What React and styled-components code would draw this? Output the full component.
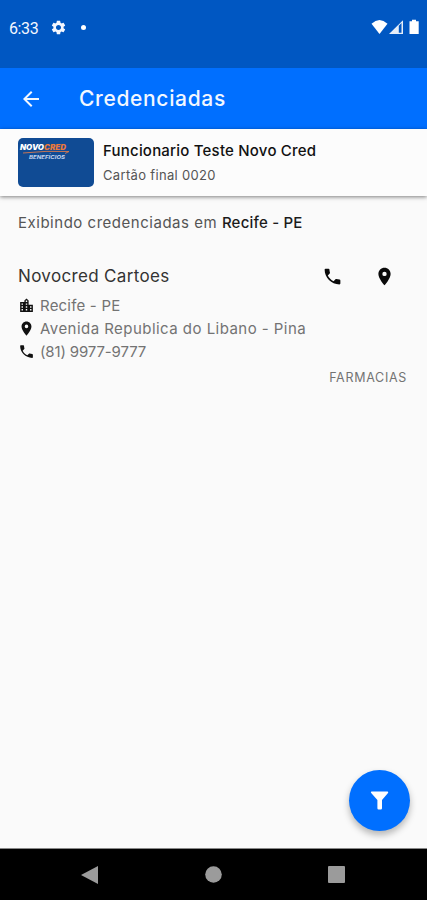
import styled, { createGlobalStyle } from "styled-components";
import {
  MdArrowBack,
  MdLocationCity,
  MdPhone,
  MdPlace,
  MdSettings,
} from "react-icons/md";

const GlobalStyle = createGlobalStyle`
  * {
    box-sizing: border-box;
  }
  body {
    margin: 0;
    background-color: #fafafa;
    font-family: Inter, "Open Sans", sans-serif;
  }
  svg {
    display: block;
    flex-shrink: 0;
  }
`;

const Screen = styled.div`
  position: relative;
  display: flex;
  flex-direction: column;
  width: 100%;
  height: 900px;
  overflow: hidden;
  background-color: #fafafa;
`;

const StatusBar = styled.div`
  display: flex;
  align-items: flex-start;
  justify-content: space-between;
  height: 68px;
  padding: 19px 7px 0 9px;
  background-color: #0057c2;
  color: #f4f7ff;
`;

const StatusGroup = styled.div`
  display: flex;
  align-items: center;
  height: 16px;
`;

const Clock = styled.span`
  width: 41px;
  padding-top: 3px;
  font-family: Roboto, sans-serif;
  font-size: 16px;
  line-height: 16px;
  letter-spacing: -0.4px;
`;

const Dot = styled.span`
  width: 5px;
  height: 5px;
  margin-left: 14px;
  border-radius: 50%;
  background-color: #fff;
`;

const AppBar = styled.header`
  display: flex;
  align-items: center;
  height: 61px;
  padding-left: 19px;
  background-color: #006fff;
  color: #f2f7ff;
`;

const Title = styled.h1`
  margin: 0 0 0 36px;
  font-size: 21px;
  font-weight: 500;
  line-height: 28px;
  letter-spacing: ${(props) => props.$spacing}px;
`;

const CardHolder = styled.section`
  position: relative;
  display: flex;
  height: 67px;
  padding: 9px 18px;
  background-color: #fcfcfc;
  box-shadow: 0 1px 4px rgba(0, 0, 0, 0.5);
`;

const BenefitCard = styled.div`
  width: 76px;
  height: 49px;
  border-radius: 5px;
  background-color: #104b94;
  color: #fff;
`;

const HolderInfo = styled.div`
  margin-left: 9px;
`;

const Text = styled.p`
  margin: 0;
  color: ${(props) => props.$color || "#737373"};
  font-size: ${(props) => props.$size}px;
  font-weight: ${(props) => props.$weight || 400};
  line-height: ${(props) => props.$line || 24}px;
  letter-spacing: ${(props) => props.$spacing || 0}px;
  white-space: nowrap;
`;

const Strong = styled.strong`
  color: #1c1c1c;
  font-weight: 500;
  letter-spacing: ${(props) => props.$spacing}px;
`;

const Content = styled.main`
  flex: 1;
  padding: 15px 18px 0;
`;

const Store = styled.article`
  margin-top: 28px;
`;

const StoreHeader = styled.div`
  display: flex;
  align-items: center;
  justify-content: space-between;
  height: 26px;
  margin-bottom: 5px;
`;

const Actions = styled.div`
  display: flex;
  gap: 31px;
  padding: 1px 14px 0 0;
`;

const IconButton = styled.button`
  padding: 0;
  border: none;
  background: none;
  color: #0a0a0a;
`;

const InfoRow = styled.div`
  display: flex;
  align-items: center;
  gap: 5px;
  height: 23px;
  color: #111;
`;

const Category = styled(Text)`
  margin-top: 3px;
  padding-right: 2px;
  text-align: right;
`;

const FilterButton = styled.button`
  position: absolute;
  right: 17px;
  bottom: 69px;
  display: flex;
  align-items: center;
  justify-content: center;
  width: 61px;
  height: 61px;
  padding: 0;
  border: none;
  border-radius: 50%;
  background-color: #006fff;
  box-shadow: 0 4px 7px rgba(0, 0, 0, 0.28);
`;

const NavBar = styled.nav`
  display: flex;
  align-items: center;
  justify-content: space-between;
  height: 52px;
  padding: 0 82px 0 81px;
  border-top: 1px solid #888;
  background-color: #000;
`;

const SignalIcons = () => (
  <svg width="49" height="16" viewBox="0 0 49 16" fill="#fff">
    <path d="M.5 4.7Q8.5-2.5 16.5 4.7L8.5 15Z" />
    <path d="M18 15L32 1.3V15Z" fillOpacity=".9" />
    <path d="M27.8 6.8L30.5 4V13.8H27.8Z" fill="#0057c2" />
    <path d="M41 .8H45V2.3H47.7V15H38.5V2.3H41Z" />
  </svg>
);

const CardLogo = () => (
  <svg width="76" height="49" viewBox="0 0 76 49">
    <g fontFamily="Inter, sans-serif" fontStyle="italic" fontWeight="900">
      <text x="2" y="12" fontSize="7.6" fill="#fff" textLength="24" lengthAdjust="spacingAndGlyphs">
        NOVO
      </text>
      <text x="26" y="12" fontSize="7.6" fill="#e9793c" textLength="22" lengthAdjust="spacingAndGlyphs">
        CRED
      </text>
      <text x="11" y="21" fontSize="5" fontWeight="700" fill="#c5d5ef" textLength="36" lengthAdjust="spacingAndGlyphs">
        BENEFÍCIOS
      </text>
    </g>
    <path d="M5 15Q28 12.5 51 13.5L47 15.5" fill="none" stroke="#d8794f" strokeWidth=".9" />
  </svg>
);

const FunnelIcon = () => (
  <svg width="19" height="19" viewBox="0 0 19 19" fill="#fff">
    <path d="M1.4 .5H17.6Q18.8 1 18 2L12 9V17.2Q12 18.5 10.8 18.5H8.6Q7.4 18.5 7.4 17.2V9L1.2 2Q.4 1 1.4 .5Z" />
  </svg>
);

const store = {
  name: "Novocred Cartoes",
  category: "FARMACIAS",
  info: [
    { icon: MdLocationCity, text: "Recife - PE", spacing: 0.2 },
    { icon: MdPlace, text: "Avenida Republica do Libano - Pina", spacing: 0.46 },
    { icon: MdPhone, text: "(81) 9977-9777", spacing: -0.14 },
  ],
};

export default function App() {
  return (
    <>
      <GlobalStyle />
      <Screen>
        <StatusBar>
          <StatusGroup>
            <Clock>6:33</Clock>
            <MdSettings size={17} />
            <Dot />
          </StatusGroup>
          <SignalIcons />
        </StatusBar>
        <AppBar>
          <MdArrowBack size={24} />
          <Title $spacing={0.66}>Credenciadas</Title>
        </AppBar>
        <CardHolder>
          <BenefitCard>
            <CardLogo />
          </BenefitCard>
          <HolderInfo>
            <Text $size={15} $weight={500} $color="#111" $line={25} $spacing={0.21}>
              Funcionario Teste Novo Cred
            </Text>
            <Text $size={13} $color="#555" $line={25} $spacing={0.33}>
              Cartão final 0020
            </Text>
          </HolderInfo>
        </CardHolder>
        <Content>
          <Text $size={15} $color="#555" $spacing={0.52}>
            Exibindo credenciadas em <Strong $spacing={0.2}>Recife - PE</Strong>
          </Text>
          <Store>
            <StoreHeader>
              <Text $size={17} $color="#333" $spacing={0.34}>
                {store.name}
              </Text>
              <Actions>
                <IconButton>
                  <MdPhone size={21} />
                </IconButton>
                <IconButton>
                  <MdPlace size={21} />
                </IconButton>
              </Actions>
            </StoreHeader>
            {store.info.map(({ icon: Icon, text, spacing }) => (
              <InfoRow key={text}>
                <Icon size={17} />
                <Text $size={15} $spacing={spacing}>
                  {text}
                </Text>
              </InfoRow>
            ))}
            <Category $size={12.5} $spacing={0.7}>
              {store.category}
            </Category>
          </Store>
        </Content>
        <FilterButton>
          <FunnelIcon />
        </FilterButton>
        <NavBar>
          <svg width="17" height="18" viewBox="0 0 17 18">
            <path d="M0 9L17 0V18Z" fill="#9b9b9b" />
          </svg>
          <svg width="17" height="17" viewBox="0 0 17 17">
            <circle cx="8.5" cy="8.5" r="8.3" fill="#9b9b9b" />
          </svg>
          <svg width="17" height="17" viewBox="0 0 17 17">
            <rect width="17" height="17" rx="1" fill="#9b9b9b" />
          </svg>
        </NavBar>
      </Screen>
    </>
  );
}
